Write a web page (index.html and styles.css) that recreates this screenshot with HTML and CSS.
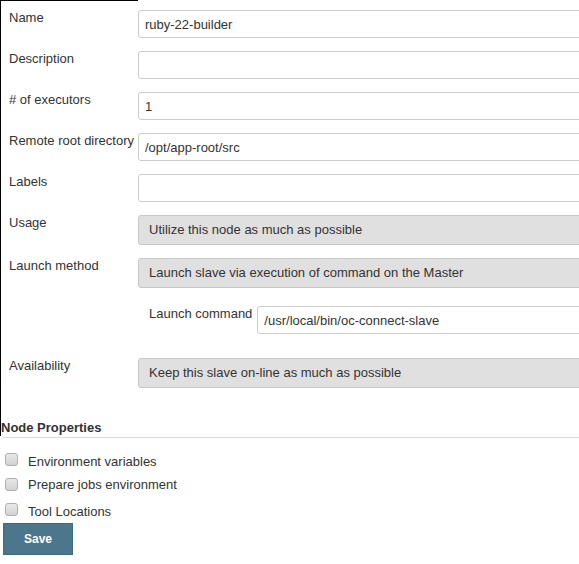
FILE: index.html
```html
<!DOCTYPE html>
<html>
<head>
<meta charset="utf-8">
<link rel="stylesheet" href="styles.css">
</head>
<body>
<div class="frame">
  <div class="frame-top"></div>
  <div class="row">
    <div class="label">Name</div>
    <div class="field"><input class="text" type="text" value="ruby-22-builder"></div>
  </div>
  <div class="row">
    <div class="label">Description</div>
    <div class="field"><input class="text" type="text" value=""></div>
  </div>
  <div class="row">
    <div class="label"># of executors</div>
    <div class="field"><input class="text" type="text" value="1"></div>
  </div>
  <div class="row">
    <div class="label">Remote root directory</div>
    <div class="field"><input class="text" type="text" value="/opt/app-root/src"></div>
  </div>
  <div class="row">
    <div class="label">Labels</div>
    <div class="field"><input class="text" type="text" value=""></div>
  </div>
  <div class="row">
    <div class="label">Usage</div>
    <div class="field"><div class="select">Utilize this node as much as possible</div></div>
  </div>
  <div class="row row-launch">
    <div class="label">Launch method</div>
    <div class="field"><div class="select">Launch slave via execution of command on the Master</div></div>
  </div>
  <div class="subrow">
    <div class="sublabel">Launch command</div>
    <div class="subfield"><input class="text" type="text" value="/usr/local/bin/oc-connect-slave"></div>
  </div>
  <div class="row row-last">
    <div class="label">Availability</div>
    <div class="field"><div class="select">Keep this slave on-line as much as possible</div></div>
  </div>
  <div class="section-title">Node Properties</div>
</div>
<div class="divider"></div>
<div class="checks">
  <div class="check check-1"><span class="box"></span><span class="check-label">Environment variables</span></div>
  <div class="check check-2"><span class="box"></span><span class="check-label">Prepare jobs environment</span></div>
  <div class="check check-3"><span class="box"></span><span class="check-label">Tool Locations</span></div>
</div>
<button class="save">Save</button>
</body>
</html>
```

FILE: styles.css
```css
html, body {
  margin: 0;
  padding: 0;
  overflow: hidden;
  background: #fff;
}
body {
  font-family: "Liberation Sans", Arial, sans-serif;
  font-size: 13px;
  color: #333;
  width: 579px;
}
.frame {
  border-left: 1px solid #000;
  width: 578px;
  overflow: hidden;
}
.frame-top {
  width: 137px;
  border-top: 1px solid #000;
  margin-bottom: 9px;
}
.row {
  display: flex;
  margin-bottom: 13px;
}
.row-launch { margin-bottom: 18px; }
.row-last { margin-bottom: 32px; }
.label {
  width: 137px;
  flex: none;
  box-sizing: border-box;
  padding-left: 8px;
  line-height: 15px;
  white-space: nowrap;
}
.field {
  width: 480px;
  flex: none;
}
.text {
  display: block;
  box-sizing: border-box;
  width: 100%;
  height: 28px;
  margin: 0;
  border: 1px solid #ccc;
  border-radius: 3px;
  padding: 0 6px;
  font: 13px "Liberation Sans", Arial, sans-serif;
  color: #333;
  background: #fff;
  outline: none;
}
.select {
  box-sizing: border-box;
  height: 30px;
  border: 1px solid #c8c8c8;
  border-radius: 3px;
  background: #e0e0e0;
  padding: 0 10px;
  line-height: 28px;
  color: #333;
  white-space: nowrap;
}
.subrow {
  display: flex;
  padding-left: 148px;
  margin-bottom: 24px;
}
.sublabel {
  line-height: 15px;
  padding-right: 5px;
  white-space: nowrap;
}
.subfield {
  width: 400px;
  flex: none;
}
.section-title {
  font-weight: bold;
  line-height: 15px;
  padding-bottom: 1px;
}
.divider {
  margin: 1px 0 0 3px;
  height: 1px;
  background: #dadada;
}
.checks {
  padding-top: 15px;
}
.check {
  display: flex;
  align-items: flex-start;
  height: 24px;
}
.check-2 { height: 26px; }
.check-3 { height: 20px; }
.box {
  box-sizing: border-box;
  width: 13px;
  height: 13px;
  margin-left: 5px;
  border: 1px solid #b0b0b0;
  border-radius: 3px;
  background: linear-gradient(#e8e8e8, #d2d2d2);
  flex: none;
}
.check-2 .box { margin-top: 1px; }
.check-label {
  margin-left: 10px;
  line-height: 15px;
  padding-top: 1px;
}
.check-2 .check-label { padding-top: 0; }
.save {
  display: block;
  margin: 0 0 0 3px;
  width: 70px;
  height: 32px;
  box-sizing: border-box;
  background: #4b768c;
  border: 1px solid #426a7f;
  color: #fff;
  font: bold 12px "Liberation Sans", Arial, sans-serif;
  padding: 0;
}
```
